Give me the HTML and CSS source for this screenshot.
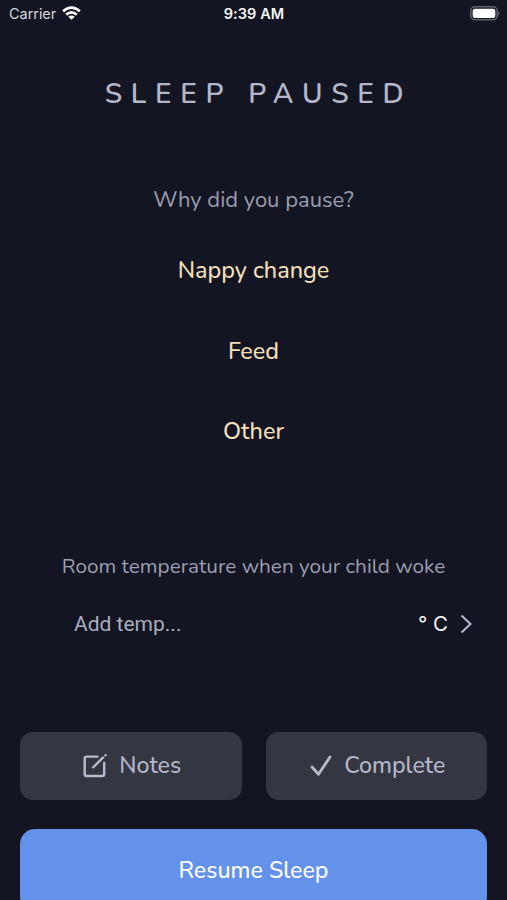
FILE: index.html
```html
<!DOCTYPE html>
<html lang="en">
<head>
<meta charset="utf-8">
<meta name="viewport" content="width=device-width, initial-scale=1">
<title>Sleep paused</title>
<link rel="stylesheet" href="styles.css">
</head>
<body>
<main class="screen">
  <header class="status">
    <div class="carrier"><span>Carrier</span>
      <svg class="wifi" width="19" height="14" viewBox="0 0 19 14" fill="none" stroke="#fff" stroke-width="2.7"><path d="M1.1 5.2Q9.5 -2 17.9 5.2"/><path d="M4.2 8.6Q9.5 4.2 14.8 8.6"/><path d="M9.5 13.8L6.2 10.7Q9.5 8.2 12.8 10.7Z" fill="#fff" stroke="none"/></svg>
    </div>
    <time class="clock">9:39 AM</time>
    <svg class="battery" width="31" height="15" viewBox="0 0 31 15"><rect x=".8" y=".8" width="26.4" height="13" rx="4" fill="none" stroke="#62636e" stroke-width="1.5"/><rect x="2.7" y="2.7" width="22.6" height="9.2" rx="2" fill="#fff"/><path d="M28.3 4.8Q31 7.3 28.3 9.8Z" fill="#62636e"/></svg>
  </header>
  <h1 class="title">SLEEP PAUSED</h1>
  <p class="question">Why did you pause?</p>
  <nav class="reasons">
    <button class="reason">Nappy change</button>
    <button class="reason">Feed</button>
    <button class="reason">Other</button>
  </nav>
  <p class="room">Room temperature when your child woke</p>
  <div class="temperature">
    <span class="placeholder">Add temp...</span>
    <span class="unit">° C</span>
    <svg class="chevron" width="12" height="20" viewBox="0 0 12 20" fill="none" stroke="#b5b9cc" stroke-width="2"><path d="M1.5 1.5L10.5 10L1.5 18.5"/></svg>
  </div>
  <div class="actions">
    <button class="action">
      <svg width="24" height="24" viewBox="0 0 24 24" fill="none" stroke="#b7bbcd" stroke-width="2.4" stroke-linecap="round"><path d="M14.5 2.6H3.7Q1.7 2.6 1.7 4.6V20Q1.7 22 3.7 22H19.2Q21.2 22 21.2 20V9"/><path d="M9.5 14L20.7 2.8" stroke-linecap="butt"/><path d="M22.4 1.3L22.6 1.2"/></svg>
      <span>Notes</span>
    </button>
    <button class="action">
      <svg width="22" height="22" viewBox="0 0 22 22" fill="none" stroke="#b7bbcd" stroke-width="2.8" stroke-linecap="round" stroke-linejoin="round"><path d="M2 12L8.5 19.3L20 2"/></svg>
      <span>Complete</span>
    </button>
  </div>
  <button class="resume">Resume Sleep</button>
</main>
</body>
</html>
```
FILE: styles.css
```css
* { box-sizing: border-box; }
body { margin: 0; background: #131522; }
.screen {
  width: 507px; height: 900px; overflow: hidden;
  display: flex; flex-direction: column;
  background: #131522; color: #b4b7c9;
  font-family: Nunito, Lato, sans-serif;
}
button { border: 0; padding: 0; background: none; font: inherit; color: inherit; }
h1, p { margin: 0; text-align: center; white-space: nowrap; }
svg { display: block; flex: none; }
.status {
  height: 28px; flex: none; padding: 0 6px 0 9px;
  display: grid; grid-template-columns: 1fr auto 1fr; align-items: center;
  font: 14.5px/28px Inter, sans-serif; color: #d5d6dc;
}
.carrier { display: flex; align-items: center; gap: 6px; }
.carrier span { letter-spacing: -.05px; }
.wifi { margin-top: -2px; }
.clock { font-weight: 600; color: #f5f5f7; letter-spacing: .1px; margin-right: 2px; }
.battery { justify-self: end; margin-top: -2px; }
.title { margin-top: 46px; height: 40px; line-height: 40px; font-size: 28px; font-weight: 650; letter-spacing: 8.7px; padding-left: 10px; }
.question { margin-top: 69px; height: 34px; line-height: 34px; font-size: 22px; color: #9b9eb0; }
.reasons { margin-top: 13px; display: flex; flex-direction: column; }
.reason { height: 80.5px; line-height: 80.5px; font-size: 23.4px; font-weight: 500; color: #f2dfb8; }
.room { flex: none; margin-top: 77px; height: 34px; line-height: 34px; font-size: 20.75px; color: #9b9eb0; }
.temperature { flex: none; margin-top: 24px; height: 34px; display: flex; align-items: center; padding: 0 35px 0 74px; }
.placeholder { flex: 1; font-family: Roboto, sans-serif; font-size: 21px; color: #a9adbe; }
.unit { font: 20.5px Inter, sans-serif; color: #f3f3f6; margin-right: 12px; }
.actions { flex: none; margin-top: 91px; padding: 0 20px; display: grid; grid-template-columns: 1fr 1fr; gap: 24px; }
.action { height: 68.5px; padding-left: 3px; border-radius: 13px; background: #343642; display: flex; align-items: center; justify-content: center; gap: 12px; font-size: 23.2px; font-weight: 500; }
.resume { flex: none; margin: 29px 20px 0; height: 82px; border-radius: 15px; background: #6491e9; color: #fff; font-size: 23.2px; font-weight: 500; }
```
